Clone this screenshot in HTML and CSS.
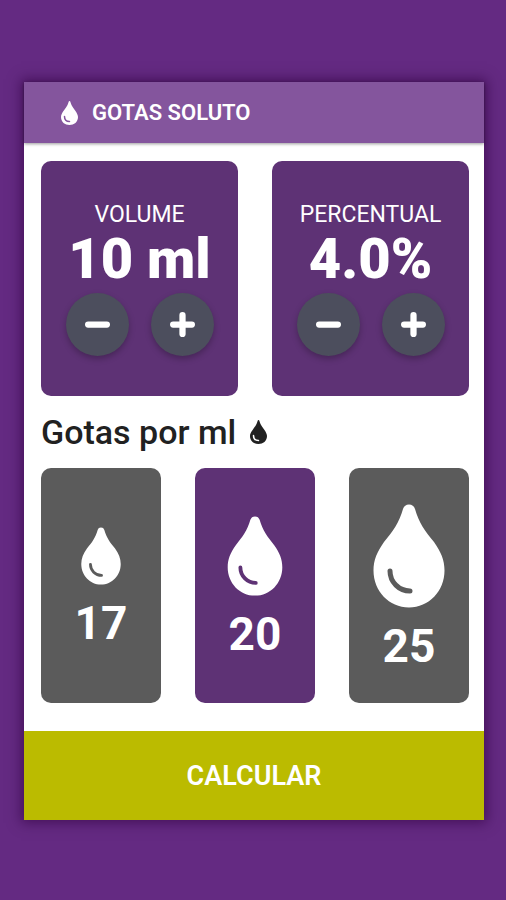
FILE: index.html
```html
<!DOCTYPE html>
<html lang="pt-BR">
<head>
    <meta charset="UTF-8">
    <meta name="viewport" content="width=device-width, initial-scale=1.0">
    <title>Gotas Soluto</title>
    <link rel="stylesheet" href="styles.css">
</head>
<body>
    <!-- Drop icons: a pointed one for titles, a rounded one for the options -->
    <svg class="sprite" aria-hidden="true">
        <symbol id="drop-title" viewBox="0 0 34 48">
            <path fill="currentColor" d="M17 0C15 0 15 4 13 8C10 15 0 24 0 32C0 42 8 48 17 48S34 42 34 32C34 24 24 15 21 8C19 4 19 0 17 0Z"/>
            <path class="title-shine" d="M7 31C7 37 11 41 17 41"/>
        </symbol>
        <symbol id="drop" viewBox="0 0 72 104">
            <path fill="currentColor" d="M36 .5C33 .5 31 2 30 5C26 19 20 27 11 38C4 48 .5 56 .5 66.500C.5 87 16 103.500 36 103.500S71.500 87 71.500 66.500C71.500 56 68 48 61 38C52 27 46 19 42 5C41 2 39 .5 36 .5Z"/>
            <path class="drop-shine" d="M17 67C17 78 26 87 37 87"/>
        </symbol>
    </svg>

    <div class="app">
        <header class="header">
            <svg class="icon-small" aria-hidden="true"><use href="#drop-title"/></svg>
            <h1>GOTAS SOLUTO</h1>
        </header>

        <main class="content">
            <div class="counters">
                <section class="counter" data-value="10" data-step="1" data-digits="0" data-unit=" ml">
                    <h2 class="counter-label">VOLUME</h2>
                    <output class="counter-value">10 ml</output>
                    <div class="counter-buttons">
                        <button type="button" class="round-button" data-direction="-1" aria-label="Diminuir volume">
                            <svg viewBox="0 0 24 24"><path d="M3 12H21"/></svg>
                        </button>
                        <button type="button" class="round-button" data-direction="1" aria-label="Aumentar volume">
                            <svg viewBox="0 0 24 24"><path d="M3 12H21M12 3V21"/></svg>
                        </button>
                    </div>
                </section>
                <section class="counter" data-value="4" data-step="0.5" data-digits="1" data-unit="%">
                    <h2 class="counter-label">PERCENTUAL</h2>
                    <output class="counter-value">4.0%</output>
                    <div class="counter-buttons">
                        <button type="button" class="round-button" data-direction="-1" aria-label="Diminuir percentual">
                            <svg viewBox="0 0 24 24"><path d="M3 12H21"/></svg>
                        </button>
                        <button type="button" class="round-button" data-direction="1" aria-label="Aumentar percentual">
                            <svg viewBox="0 0 24 24"><path d="M3 12H21M12 3V21"/></svg>
                        </button>
                    </div>
                </section>
            </div>

            <h2 class="subtitle" id="drops-title">
                Gotas por ml
                <svg class="icon-small" aria-hidden="true"><use href="#drop-title"/></svg>
            </h2>

            <div class="options" role="radiogroup" aria-labelledby="drops-title">
                <label class="option" for="drops-17">
                    <input type="radio" name="drops" id="drops-17" value="17">
                    <svg class="drop-17" aria-hidden="true"><use href="#drop"/></svg>
                    <span>17</span>
                </label>
                <label class="option" for="drops-20">
                    <input type="radio" name="drops" id="drops-20" value="20" checked>
                    <svg class="drop-20" aria-hidden="true"><use href="#drop"/></svg>
                    <span>20</span>
                </label>
                <label class="option" for="drops-25">
                    <input type="radio" name="drops" id="drops-25" value="25">
                    <svg class="drop-25" aria-hidden="true"><use href="#drop"/></svg>
                    <span>25</span>
                </label>
            </div>
        </main>

        <button type="button" class="calculate">CALCULAR</button>
    </div>

    <script>
        // Plus and minus buttons
        document.querySelectorAll('.counter').forEach(counter => {
            const output = counter.querySelector('.counter-value');
            const { step, digits, unit } = counter.dataset;
            let value = Number(counter.dataset.value);

            counter.querySelectorAll('.round-button').forEach(button => {
                button.addEventListener('click', () => {
                    value = Math.max(0, value + Number(step) * Number(button.dataset.direction));
                    output.textContent = value.toFixed(Number(digits)) + unit;
                });
            });
        });
    </script>
</body>
</html>
```

FILE: styles.css
```css
* {
    box-sizing: border-box;
}
body {
    margin: 0;
    padding: 82px 22px 80px 24px;
    background-color: #642a82;
    font-family: Roboto, sans-serif;
}
h1, h2 {
    margin: 0;
}
button {
    border: none;
    font-family: inherit;
    color: #fff;
    cursor: pointer;
}
.sprite {
    display: none;
}
.app {
    display: flex;
    flex-direction: column;
    background-color: #fff;
    box-shadow: 0 0 12px 3px rgba(48, 0, 64, 0.6);
}
.header {
    display: flex;
    align-items: center;
    gap: 14px;
    height: 61px;
    padding: 0 37px;
    background-color: #84559d;
    color: #fff;
    box-shadow: 0 1px 3px rgba(0, 0, 0, 0.4);
    --shine: #84559d;
}
.header h1 {
    font-size: 22px;
    font-weight: 600;
}
.icon-small {
    width: 17px;
    height: 24px;
}
.drop-shine, .title-shine {
    fill: none;
    stroke: var(--shine);
    stroke-width: 5px;
    stroke-linecap: round;
}
.title-shine {
    stroke-width: 3px;
}
.content {
    padding: 18px 15px 28px 17px;
}
.counters, .options {
    display: grid;
    gap: 34px;
}
.counters {
    grid-template-columns: repeat(2, 1fr);
}
.options {
    grid-template-columns: repeat(3, 1fr);
}
.counter, .option {
    display: flex;
    flex-direction: column;
    align-items: center;
    justify-content: center;
    min-height: 235px;
    border-radius: 10px;
    background-color: #5e3275;
    color: #fff;
}
.counter-label {
    font-size: 23px;
    line-height: 28px;
    font-weight: 400;
}
.counter-value {
    font-size: 56px;
    line-height: 60px;
    font-weight: 900;
}
.counter-buttons {
    display: flex;
    gap: 22px;
    margin-top: 4px;
}
.round-button {
    display: flex;
    align-items: center;
    justify-content: center;
    width: 63px;
    height: 63px;
    padding: 0;
    border-radius: 50%;
    background-color: #4c4e5d;
    box-shadow: 0 3px 6px rgba(0, 0, 0, 0.25);
}
.round-button svg {
    width: 25px;
    height: 25px;
    fill: none;
    stroke: #fff;
    stroke-width: 6px;
    stroke-linecap: round;
}
.subtitle {
    display: flex;
    align-items: center;
    gap: 14px;
    padding: 16px 0;
    font-size: 34px;
    line-height: 40px;
    font-weight: 500;
    color: #212121;
    --shine: #fff;
}
.option {
    position: relative;
    gap: 16px;
    background-color: #5b5b5b;
    cursor: pointer;
    --shine: #5b5b5b;
}
.option:has(input:checked) {
    background-color: #5e3275;
    --shine: #5e3275;
}
/* The whole card works as the radio button */
.option input {
    position: absolute;
    inset: 0;
    width: 100%;
    height: 100%;
    margin: 0;
    opacity: 0;
    cursor: pointer;
}
.option span {
    font-size: 46px;
    line-height: 44px;
    font-weight: 700;
}
.drop-17 {
    width: 40px;
    height: 58px;
}
.drop-20 {
    width: 56px;
    height: 80px;
}
.drop-25 {
    width: 72px;
    height: 104px;
}
.calculate {
    height: 89px;
    background-color: #bbbb00;
    font-size: 27px;
    font-weight: 600;
}
```
